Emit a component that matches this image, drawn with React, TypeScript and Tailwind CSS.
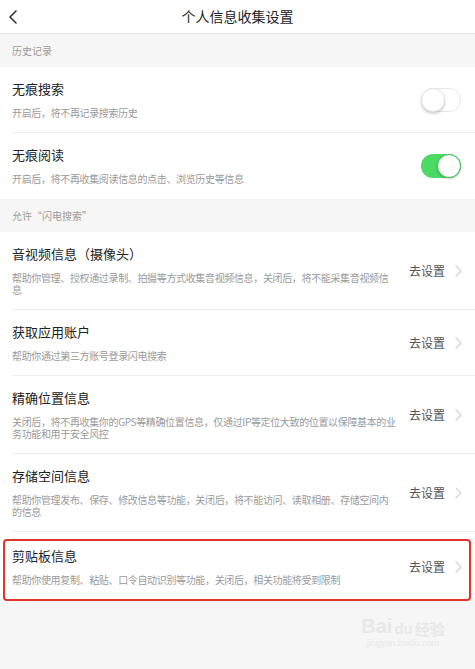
import React from "react";

const font = { fontFamily: '"Noto Sans CJK SC", "Noto Sans", sans-serif' };

function Toggle({ on }: { on: boolean }) {
  if (on) {
    return (
      <div className="relative w-[40px] h-[24px] rounded-full bg-[#4cd964]">
        <div className="absolute right-0 top-0 w-[24px] h-[24px] rounded-full bg-white border border-[#3fbf57] shadow-[0_1px_2px_rgba(0,0,0,0.2)]" />
      </div>
    );
  }
  return (
    <div className="relative w-[40px] h-[24px] rounded-full bg-white border border-[#e6e6e6]">
      <div className="absolute left-[-1px] top-[-1px] w-[24px] h-[24px] rounded-full bg-white border border-[#e2e2e2] shadow-[0_2px_3px_rgba(0,0,0,0.18)]" />
    </div>
  );
}

function Chevron() {
  return (
    <svg width="7" height="12" viewBox="0 0 7 12" fill="none">
      <path d="M1 1l5 5-5 5" stroke="#d4d4d4" strokeWidth="1.2" strokeLinecap="round" strokeLinejoin="round" />
    </svg>
  );
}

function Section({ label }: { label: string }) {
  return (
    <div className="bg-[#f6f6f6] h-[33px] flex items-center pl-3 text-[10px] text-[#9a9a9a]">{label}</div>
  );
}

function ToggleRow({ title, sub, on, divider }: { title: string; sub: string; on: boolean; divider?: boolean }) {
  return (
    <div className="bg-white pl-3">
      <div className={`flex items-center pr-[14px] pt-[13px] ${divider ? "border-b border-[#efefef] pb-[13px]" : "pb-[14px]"}`}>
        <div className="flex-1">
          <div className="text-[13px] leading-[18px] text-[#222]">{title}</div>
          <div className="mt-[9px] text-[10px] leading-[12px] tracking-[-0.35px] text-[#9a9a9a]">{sub}</div>
        </div>
        <Toggle on={on} />
      </div>
    </div>
  );
}

function LinkRow({
  title,
  sub,
  divider,
  last,
  wide,
}: {
  title: string;
  sub: string;
  divider?: boolean;
  last?: boolean;
  wide?: boolean;
}) {
  return (
    <div className="bg-white pl-3">
      <div
        className={`flex items-center pr-[13px] ${last ? "pt-[15px] pb-[13px]" : "pt-[13px]"} ${
          divider ? "border-b border-[#efefef] pb-[13px]" : ""
        }`}
      >
        <div className="flex-1 min-w-0">
          <div className="text-[13px] leading-[18px] text-[#222]">{title}</div>
          <div
            className={`mt-[9px] ${wide ? "w-[392px]" : "w-[382px]"} text-[10px] leading-[12px] tracking-[-0.35px] text-[#9a9a9a] break-all`}
          >
            {sub}
          </div>
        </div>
        <div className="flex items-center gap-[10px] shrink-0">
          <span className="text-[12px] text-[#555]">去设置</span>
          <Chevron />
        </div>
      </div>
    </div>
  );
}

export default function App() {
  return (
    <div className="relative w-[475px] h-[669px] bg-[#f6f6f6] overflow-hidden" style={font}>
      <div className="relative bg-white h-[34px] border-b border-[#e4e4e4] flex items-center justify-center">
        <svg className="absolute left-[8px] top-[10px]" width="10" height="14" viewBox="0 0 10 14" fill="none">
          <path d="M8 1L2 7l6 6" stroke="#333" strokeWidth="1.6" strokeLinecap="round" strokeLinejoin="round" />
        </svg>
        <span className="text-[14px] text-[#222]">个人信息收集设置</span>
      </div>
      <Section label="历史记录" />
      <ToggleRow title="无痕搜索" sub="开启后，将不再记录搜索历史" on={false} divider />
      <ToggleRow title="无痕阅读" sub="开启后，将不再收集阅读信息的点击、浏览历史等信息" on={true} />
      <Section label={"允许\u201c闪电搜索\u201d"} />
      <LinkRow title="音视频信息（摄像头）" sub="帮助你管理、授权通过录制、拍摄等方式收集音视频信息，关闭后，将不能采集音视频信息" divider />
      <LinkRow title="获取应用账户" sub="帮助你通过第三方账号登录闪电搜索" divider />
      <LinkRow title="精确位置信息" sub="关闭后，将不再收集你的GPS等精确位置信息，仅通过IP等定位大致的位置以保障基本的业务功能和用于安全风控" divider wide />
      <LinkRow title="存储空间信息" sub="帮助你管理发布、保存、修改信息等功能，关闭后，将不能访问、读取相册、存储空间内的信息" divider />
      <div className="relative">
        <LinkRow title="剪贴板信息" sub="帮助你使用复制、粘贴、口令自动识别等功能，关闭后，相关功能将受到限制" last />
        <div className="absolute left-[3px] right-[4px] top-[7px] bottom-[-2px] border-[2.5px] border-[#e2342c] rounded-[4px]" />
      </div>
      <div className="absolute left-[358px] top-[616px] w-[90px] flex flex-col items-center text-[#e8e8e8] leading-none">
        <div className="flex items-end gap-[2px]">
          <span className="text-[20px] font-bold" style={{ fontFamily: '"Liberation Sans", sans-serif' }}>Bai</span>
          <span className="text-[15px] font-bold" style={{ fontFamily: '"Liberation Sans", sans-serif' }}>du</span>
          <span className="text-[15px] font-bold">经验</span>
        </div>
        <span className="mt-[3px] text-[9px]" style={{ fontFamily: '"Liberation Sans", sans-serif' }}>jingyan.baidu.com</span>
      </div>
    </div>
  );
}
